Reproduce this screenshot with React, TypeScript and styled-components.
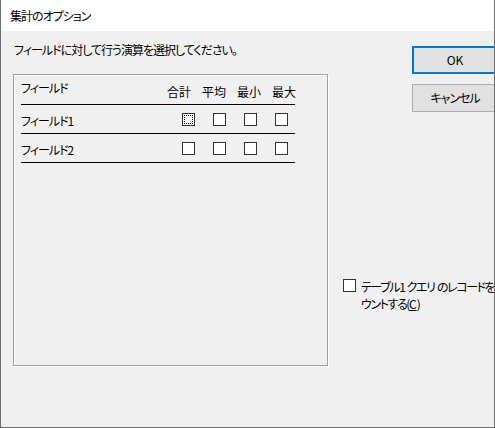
import React from "react";
import styled, { createGlobalStyle } from "styled-components";

const Global = createGlobalStyle`
  html, body { margin: 0; padding: 0; background: #ffffff; }
  body {
    font-family: "Noto Sans CJK JP", "Noto Sans", sans-serif;
    font-size: 12px;
    color: #000;
  }
  * { box-sizing: border-box; }
`;

const Window = styled.div`
  width: 495px;
  height: 428px;
  display: flex;
  flex-direction: column;
  border: 1px solid #6f6f6f;
  border-top: none;
  overflow: hidden;
  font-feature-settings: "palt";
  letter-spacing: -1px;
`;

const TitleBar = styled.div`
  height: 31px;
  flex: none;
  background: #ffffff;
  display: flex;
  align-items: center;
  padding-left: 9px;
  padding-top: 1px;
  line-height: 16px;
`;

const Body = styled.div`
  flex: 1;
  background: #f0f0f0;
  display: flex;
  padding: 11px 0 0 12px;
`;

const LeftColumn = styled.div`
  display: flex;
  flex-direction: column;
  width: 316px;
  flex: none;
`;

const Instruction = styled.div`
  line-height: 16px;
  padding-left: 1px;
  height: 16px;
  white-space: nowrap;
`;

const GroupBox = styled.div`
  margin-top: 16px;
  width: 315px;
  height: 292px;
  border: 1px solid #a0a0a0;
  box-shadow: inset 1px 1px 0 #ffffff, 1px 1px 0 #ffffff;
  padding: 5px 0 0 7px;
`;

const Table = styled.div`
  width: 274px;
  display: flex;
  flex-direction: column;
`;

const HeaderRow = styled.div`
  height: 25px;
  display: flex;
  justify-content: space-between;
  border-bottom: 1px solid #000;
  line-height: 16px;
`;

const FieldHeader = styled.div`
  align-self: flex-start;
`;

const ColumnHeaders = styled.div`
  display: flex;
  gap: 11px;
  align-self: flex-end;
  padding-bottom: 4px;
  margin-right: -1px;
  letter-spacing: 0;
`;

const ColumnHeader = styled.div`
  width: 24px;
  white-space: nowrap;
`;

const Row = styled.div`
  height: 29px;
  display: flex;
  align-items: center;
  justify-content: space-between;
  border-bottom: 1px solid #000;
  line-height: 16px;
  padding-top: 1px;
`;

const RowLabel = styled.div`
  padding-top: 2px;
`;

const Boxes = styled.div`
  display: flex;
  gap: 18px;
  margin-right: 7px;
`;

const CheckBox = styled.span<{ $focused?: boolean }>`
  position: relative;
  display: inline-block;
  width: 13px;
  height: 13px;
  flex: none;
  background: #ffffff;
  border: 1px solid #333333;
  &::after {
    content: "";
    position: absolute;
    inset: 1px;
    border: 1px dotted #000;
    display: ${(p) => (p.$focused ? "block" : "none")};
  }
`;

const RightColumn = styled.div`
  flex: 1;
  display: flex;
  flex-direction: column;
  padding-left: 14px;
  min-width: 0;
`;

const Button = styled.div<{ $primary?: boolean }>`
  margin-left: 69px;
  width: 86px;
  height: 28px;
  flex: none;
  display: flex;
  align-items: center;
  justify-content: center;
  background: #e1e1e1;
  border: ${(p) => (p.$primary ? "2px solid #0078d7" : "1px solid #adadad")};
  line-height: 16px;
  white-space: nowrap;
`;

const OkButton = styled(Button)`
  margin-top: 4px;
  letter-spacing: 0;
`;

const CancelButton = styled(Button)`
  margin-top: 10px;
`;

const CountOption = styled.div`
  margin-top: 167px;
  display: flex;
  align-items: flex-start;
  gap: 5px;
  width: max-content;
`;

const OptionText = styled.div`
  flex: none;
  line-height: 17px;
  margin-top: -1px;
  white-space: nowrap;
  letter-spacing: -1.4px;
  word-spacing: 1px;
`;

const OptionLine = styled.div`
  white-space: nowrap;
`;

const Accel = styled.span`
  text-decoration: underline;
  letter-spacing: 0;
`;

export default function App() {
  return (
    <>
      <Global />
      <Window>
        <TitleBar>集計のオプション</TitleBar>
        <Body>
          <LeftColumn>
            <Instruction>フィールドに対して行う演算を選択してください。</Instruction>
            <GroupBox>
              <Table>
                <HeaderRow>
                  <FieldHeader>フィールド</FieldHeader>
                  <ColumnHeaders>
                    <ColumnHeader>合計</ColumnHeader>
                    <ColumnHeader>平均</ColumnHeader>
                    <ColumnHeader>最小</ColumnHeader>
                    <ColumnHeader>最大</ColumnHeader>
                  </ColumnHeaders>
                </HeaderRow>
                <Row>
                  <RowLabel>フィールド1</RowLabel>
                  <Boxes>
                    <CheckBox $focused />
                    <CheckBox />
                    <CheckBox />
                    <CheckBox />
                  </Boxes>
                </Row>
                <Row>
                  <RowLabel>フィールド2</RowLabel>
                  <Boxes>
                    <CheckBox />
                    <CheckBox />
                    <CheckBox />
                    <CheckBox />
                  </Boxes>
                </Row>
              </Table>
            </GroupBox>
          </LeftColumn>
          <RightColumn>
            <OkButton $primary>OK</OkButton>
            <CancelButton>キャンセル</CancelButton>
            <CountOption>
              <CheckBox />
              <OptionText>
                <OptionLine>テーブル1 クエリ のレコードをカ</OptionLine>
                <OptionLine>
                  ウントする(<Accel>C</Accel>)
                </OptionLine>
              </OptionText>
            </CountOption>
          </RightColumn>
        </Body>
      </Window>
    </>
  );
}
